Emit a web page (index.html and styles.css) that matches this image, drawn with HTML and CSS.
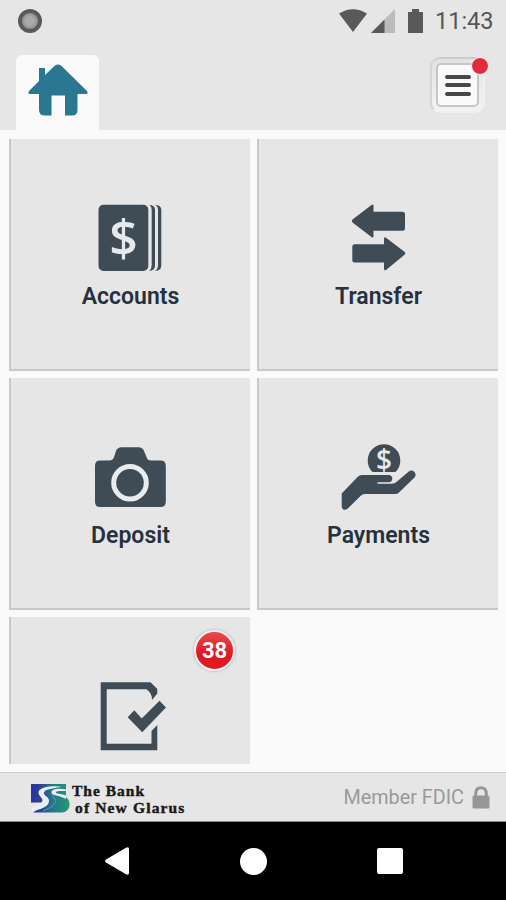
FILE: index.html
```html
<!DOCTYPE html>
<html lang="en">
<head>
    <meta charset="UTF-8">
    <meta name="viewport" content="width=device-width, initial-scale=1.0">
    <title>The Bank of New Glarus</title>
    <link rel="stylesheet" href="styles.css">
</head>
<body>
<div class="screen">
    <div class="status-bar">
        <span class="record"></span>
        <div class="status-right">
            <svg class="wifi" width="28" height="24" viewBox="0 0 28 24"><path d="M0 4.500Q14-4 28 4.500L14 23Z"/></svg>
            <svg class="signal" width="24" height="24" viewBox="0 0 24 24"><path d="M0 24L24 0V24Z" opacity=".3"/><path d="M0 24L13.500 10.500V24Z"/></svg>
            <svg class="battery" width="15" height="24" viewBox="0 0 15 24"><path d="M4 0h7v3h4v21H0V3h4z"/></svg>
            <span class="clock">11:43</span>
        </div>
    </div>
    <div class="header">
        <div class="home-tab">
            <svg width="60" height="52" viewBox="0 0 60 52"><path d="M27 1.500Q30-.5 33 1.500L59 27Q60.500 30 58 30H49.500V46Q49.500 51.500 44 51.500H37V31.500H23.500V51.500H17Q11 51.500 11 46V30H2Q-.5 30 1 27L11 17V4H17V11Z"/></svg>
        </div>
        <button class="menu-button">
            <span class="menu-inner">
                <i></i><i></i><i></i>
            </span>
            <span class="menu-dot"></span>
        </button>
    </div>
    <div class="tiles">
        <div class="tile">
            <svg class="icon" viewBox="0 0 81 75">
                <rect x="8.500" y="4.700" width="49.800" height="66.300" rx="5"/>
                <path d="M59 4.700Q65 5 65 10V65.500Q65 70.500 59 71Q61.700 69 61.700 65V10Q61.700 6 59 4.700Z"/>
                <path d="M65 4.700Q71.300 5 71.300 10V65.500Q71.300 70.500 65 71Q68 69 68 65V10Q68 6 65 4.700Z"/>
                <text class="dollar" x="33.500" y="56" font-size="50">$</text>
            </svg>
            <span class="label">Accounts</span>
        </div>
        <div class="tile">
            <svg class="icon" viewBox="0 0 81 75">
                <path d="M14.500 22.500Q13 21 14.500 19.500L33.500 5Q35.500 3.700 35.500 6V11.700H64.500Q67 11.700 67 14.200V28.200Q67 30.700 64.500 30.700H35.500V36Q35.500 38.500 33.500 37Z"/>
                <path d="M66.500 54.800Q68 53.300 66.500 51.800L48 37.700Q46 36.500 46 39V44.300H16.800Q14.300 44.300 14.300 46.800V60Q14.300 62.500 16.800 62.500H46V69Q46 71 48 70Z"/>
            </svg>
            <span class="label">Transfer</span>
        </div>
        <div class="tile">
            <svg class="icon" viewBox="0 0 81 75">
                <path d="M10 21.500H19Q23 21.500 24 18L26 12Q27.500 8.300 31.500 8.300H48.500Q52.500 8.300 54 12L56.500 18Q57.500 21.500 61 21.500H70.500Q75.800 21.500 75.800 26.800V62.500Q75.800 68 70.500 68H10Q5 68 5 62.500V26.800Q5 21.500 10 21.500Z"/>
                <circle class="lens" cx="40" cy="43.700" r="16.300"/>
            </svg>
            <span class="label">Deposit</span>
        </div>
        <div class="tile">
            <svg class="icon" viewBox="0 0 81 75">
                <path d="M34.500 33A16.300 16.300 0 1 1 57.500 33Z"/>
                <text class="dollar" x="46" y="31" font-size="28">$</text>
                <path d="M3.700 54.500L20 37.500Q21.500 36 24 36H50.500Q54.300 36 54.300 39.500Q54.300 43.200 50.500 43.200H39.500V44.700H53Q57 44.700 59 42.500L70.500 32.800Q73 30.500 76 32.500Q79 35.500 76.500 38.500L61 53.500Q59.500 55 57 55H27Q24.500 55 22.500 57L9.500 69.700Q7.500 71.500 5.300 70.500Q3.700 69.500 3.700 67.500Z"/>
            </svg>
            <span class="label">Payments</span>
        </div>
        <div class="tile tile-cut">
            <svg class="icon" viewBox="0 0 81 75">
                <path d="M10.700 4.300H60.500L67.300 11V15.500L62 22Q62.500 16 56.500 11.300H16.700V65.700H61.500V53L67.300 47V72.300H10.700Z"/>
                <path d="M37.700 39.300L44.300 32.300L51.700 40.500L69.500 22.700L76 29.500L52.200 54.300Z"/>
            </svg>
            <span class="badge">38</span>
        </div>
    </div>
    <div class="footer">
        <div class="brand">
            <svg class="logo" width="39" height="29" viewBox="0 0 39 29">
                <defs>
                    <linearGradient id="river" gradientUnits="userSpaceOnUse" x1="0" y1="0" x2="39" y2="0">
                        <stop offset="0" stop-color="#2c329b"/>
                        <stop offset=".2" stop-color="#2a3f98"/>
                        <stop offset=".55" stop-color="#25768c"/>
                        <stop offset="1" stop-color="#259b72"/>
                    </linearGradient>
                </defs>
                <path fill="url(#river)" d="M0 0H35V13C39 16 40 23 36 26.500Q34 28.500 31 28.500H2C6 26 11 23 12 18.500H0Z"/>
                <path class="stream" d="M31 2.800C23 1.500 7 2.500 7.500 9C8 13 13 14 11 18C9 21 0 21 0 27.500C10 25 18 23 18 17C18 12 12 12 13 8.500C14 5 23 4.500 31 2.800Z"/>
                <path class="stream" d="M35 5.500C29 4 20 4.500 20.500 8.500C21 12 28 11 35 15V11.500C30 9.500 24 10 25 8C26 6.500 31 7 35 7Z"/>
                <path class="bank-line" d="M20.500 9C21 13 26 15 24 19C22 23 16 25 12 27"/>
            </svg>
            <div class="brand-name">
                <span class="brand-top">The Bank</span>
                <span class="brand-bottom">of New Glarus</span>
            </div>
        </div>
        <div class="member">
            <span>Member FDIC</span>
            <svg width="18" height="23" viewBox="0 0 18 23"><path class="shackle" d="M3.700 11V7.500Q3.700 1.700 9 1.700T14.300 7.500V11"/><rect x=".5" y="9.500" width="17" height="13" rx="1.500"/></svg>
        </div>
    </div>
    <div class="nav-bar">
        <svg class="back" width="24" height="28" viewBox="0 0 24 28"><path d="M1 15.500Q-.8 14 1 12.500L21 .8Q24-.5 24 2V26Q24 28.500 21 27.200Z"/></svg>
        <span class="home"></span>
        <span class="recent"></span>
    </div>
</div>
</body>
</html>
```
FILE: styles.css
```css
body {
    margin: 0;
    font-family: Roboto, "Liberation Sans", sans-serif;
    background: #fafafa;
    overflow: hidden;
}
.screen {
    display: flex;
    flex-direction: column;
    width: 506px;
    height: 900px;
    background: #fafafa;
}
svg {
    display: block;
    flex: none;
}
.status-bar {
    display: flex;
    justify-content: space-between;
    align-items: center;
    height: 41px;
    padding: 0 13px 0 18px;
    background: #e6e6e6;
    box-sizing: border-box;
}
.record {
    width: 16px;
    height: 16px;
    border: 4px solid #5a5a5a;
    border-radius: 50%;
    background: radial-gradient(circle, #aaa 35%, #8c8c8c 75%);
}
.status-right {
    display: flex;
    align-items: center;
    fill: #595959;
}
.wifi {
    margin-right: 4px;
}
.signal {
    margin-right: 13px;
}
.battery {
    margin-right: 12px;
}
.clock {
    width: 58px;
    font-size: 23.5px;
    line-height: 24px;
    color: #555;
    white-space: nowrap;
}
.header {
    display: flex;
    justify-content: space-between;
    align-items: flex-start;
    height: 89px;
    padding: 14px 21px 0 16px;
    background: #e6e6e6;
    box-sizing: border-box;
}
.home-tab {
    display: flex;
    justify-content: center;
    width: 83px;
    height: 75px;
    padding-top: 9px;
    border-radius: 6px 6px 0 0;
    background: #fafafa;
    box-sizing: border-box;
    fill: #2b7690;
}
.menu-button {
    position: relative;
    display: flex;
    justify-content: center;
    align-items: center;
    width: 55px;
    height: 56px;
    margin-top: 2px;
    padding: 0;
    border: 2px solid #f0f0f0;
    border-top-color: #ccc;
    border-left-color: #d5d5d5;
    border-radius: 10px;
    background: linear-gradient(#e2e2e2, #f3f3f3);
    box-sizing: border-box;
}
.menu-inner {
    display: flex;
    flex-direction: column;
    justify-content: center;
    align-items: center;
    gap: 4.5px;
    width: 43px;
    height: 44px;
    border: 2px solid #c6c6c6;
    border-radius: 5px;
    background: #fafafa;
    box-sizing: border-box;
}
.menu-inner i {
    width: 26px;
    height: 4px;
    border-radius: 2px;
    background: #484848;
}
.menu-dot {
    position: absolute;
    top: -2px;
    right: -6px;
    width: 16px;
    height: 16px;
    border: 1px solid #fafafa;
    border-radius: 50%;
    background: #e22c3e;
}
.tiles {
    display: grid;
    grid-template-columns: 241px 241px;
    grid-template-rows: 232px 232px 147px;
    gap: 7px;
    height: 642px;
    padding: 9px 9px 0;
    box-sizing: border-box;
}
.tile {
    position: relative;
    display: flex;
    flex-direction: column;
    align-items: center;
    padding-top: 61px;
    border-left: 2px solid #c8c8c8;
    border-bottom: 2px solid #c8c8c8;
    background: #e6e6e6;
    box-sizing: border-box;
}
.tile-cut {
    border-bottom: none;
}
.icon {
    width: 81px;
    height: 75px;
    fill: #3f4c55;
}
.dollar {
    font-family: "Open Sans", sans-serif;
    font-weight: 600;
    text-anchor: middle;
    fill: #e6e9ec;
}
.lens {
    fill: none;
    stroke: #e9ebed;
    stroke-width: 5;
}
.label {
    margin-top: 8px;
    font-size: 23px;
    font-weight: 600;
    line-height: 28px;
    color: #25323e;
}
.badge {
    position: absolute;
    top: 13px;
    right: 15px;
    width: 37px;
    height: 37px;
    border: 2px solid #f6f0ee;
    border-radius: 50%;
    background: linear-gradient(#e8494f, #e01920 60%, #e01a20);
    box-shadow: 0 0 2px 1px #c4c4c4;
    color: #fff;
    font-size: 22px;
    font-weight: 700;
    line-height: 38px;
    text-align: center;
}
.footer {
    display: flex;
    justify-content: space-between;
    height: 50px;
    padding: 0 16px 0 31px;
    border-top: 1px solid #c9c9c9;
    border-bottom: 1px solid #888;
    background: #e6e6e6;
    box-sizing: border-box;
}
.brand {
    display: flex;
    padding-top: 11px;
}
.stream {
    fill: #e9eff0;
}
.bank-line {
    fill: none;
    stroke: #5b9fb0;
    stroke-width: 1;
}
.brand-name {
    display: flex;
    flex-direction: column;
    margin: -2px 0 0 2px;
    font-family: "Liberation Serif", serif;
    font-size: 15.5px;
    font-weight: 700;
    line-height: 17px;
    color: #191919;
    -webkit-text-stroke: 0.4px #191919;
    white-space: nowrap;
}
.brand-top {
    letter-spacing: 1px;
}
.brand-bottom {
    padding-left: 3px;
    letter-spacing: 1.15px;
}
.member {
    display: flex;
    align-items: center;
    gap: 8px;
    padding-top: 1px;
    font-size: 19.8px;
    color: #999;
    fill: #969696;
}
.shackle {
    fill: none;
    stroke: #969696;
    stroke-width: 3;
}
.nav-bar {
    display: flex;
    align-items: center;
    height: 78px;
    padding-left: 105px;
    background: #000;
    fill: #fff;
}
.home {
    width: 27px;
    height: 27px;
    margin-left: 111px;
    border-radius: 50%;
    background: #fff;
}
.recent {
    width: 26px;
    height: 26px;
    margin-left: 110px;
    border-radius: 2px;
    background: #fff;
}
```
